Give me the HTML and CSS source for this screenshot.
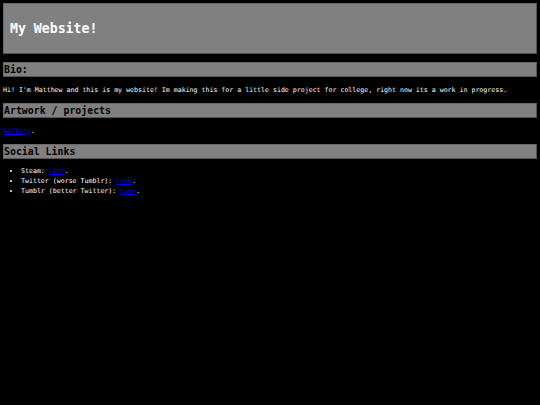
FILE: index.html
```html
<!DOCTYPE html>
<html>
<head>
<meta charset="utf-8">
<title>My Website!</title>
<link rel="stylesheet" href="styles.css">
</head>
<body>
<div class="header"><h1>My Website!</h1></div>
<h2 class="bar">Bio:</h2>
<p class="text">Hi! I'm Matthew and this is my website! Im making this for a little side project for college, right now its a work in progress.</p>
<h2 class="bar">Artwork / projects</h2>
<p class="text"><a href="#">Gallery</a>.</p>
<h2 class="bar">Social Links</h2>
<ul class="links">
<li>Steam: <a href="#">Link</a>.</li>
<li>Twitter (worse Tumblr): <a href="#">Link</a>.</li>
<li>Tumblr (better Twitter): <a href="#">Link</a>.</li>
</ul>
</body>
</html>
```
FILE: styles.css
```css
html { background: #000; }
body {
  margin: 3px;
  background: #000;
  color: #fff;
  font-family: "DejaVu Sans Mono", monospace;
  font-size: 6.6px;
}
.header {
  background: #808080;
  border: 1px solid #555;
  border-top-color: #6a6a6a;
  border-left-color: #6a6a6a;
  height: 49px;
  padding: 0 6px;
  display: flex;
  align-items: center;
}
.header h1 {
  margin: 0;
  font-size: 13.2px;
  font-weight: bold;
  color: #fff;
  line-height: 16px;
}
.bar {
  margin: 8px 0 0 0;
  background: #808080;
  color: #000;
  font-size: 9.9px;
  font-weight: bold;
  line-height: 13px;
  border: 1px solid #555;
  border-top-color: #6a6a6a;
  border-left-color: #6a6a6a;
  padding: 0;
}
.bar + .text { margin-top: 7.5px; }
.text {
  margin: 7.5px 0 0 0;
  line-height: 10px;
}
.text + .bar { margin-top: 8.5px; }
.links {
  margin: 7px 0 0 0;
  padding-left: 18px;
  line-height: 10px;
}
a { color: #0000ee; text-decoration: underline; }
```
